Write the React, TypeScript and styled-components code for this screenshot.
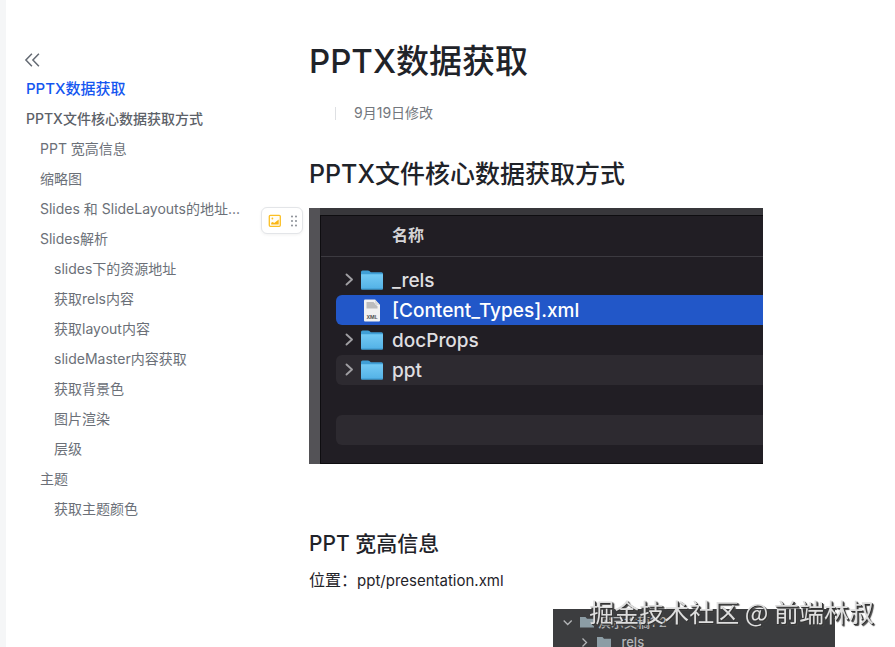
import React from "react";
import styled, { createGlobalStyle } from "styled-components";

const GlobalStyle = createGlobalStyle`
  *, *::before, *::after { box-sizing: border-box; }
  body {
    margin: 0;
    background: #fff;
    color: #1f2329;
    font-family: Inter, "Noto Sans CJK SC", sans-serif;
  }
  h1, h2, h3, p, ul { margin: 0; padding: 0; }
  ul { list-style: none; }
`;

const Page = styled.div`
  display: flex;
  height: 100vh;
  overflow: hidden;
  border-left: 6px solid #f5f6f7;
`;

const Sidebar = styled.nav`
  flex: none;
  width: 240px;
  padding: 46px 0 0 16px;
`;

const CollapseButton = styled.button`
  display: flex;
  align-items: center;
  justify-content: center;
  width: 20px;
  height: 28px;
  padding: 0;
  border: 0;
  background: none;
  color: #646a73;
  cursor: pointer;
`;

const OutlineLink = styled.a<{ $level: number; $active?: boolean }>`
  display: block;
  padding-left: ${(p) => 4 + p.$level * 14}px;
  overflow: hidden;
  color: ${(p) => (p.$active ? "#1456f0" : p.$level === 0 ? "#5c6168" : "#6b7078")};
  font-size: ${(p) => (p.$active ? 15 : 14)}px;
  font-weight: ${(p) => (p.$level === 0 ? 500 : 400)};
  line-height: 30px;
  text-decoration: none;
  text-overflow: ellipsis;
  white-space: nowrap;
`;

const Gutter = styled.div`
  display: flex;
  flex: none;
  align-items: flex-start;
  justify-content: flex-end;
  width: 63px;
  padding: 207px 6px 0 0;
`;

const BlockHandle = styled.button`
  display: flex;
  align-items: center;
  justify-content: space-between;
  width: 42px;
  height: 27px;
  padding: 0 2px 0 6px;
  border: 1px solid #e3e5e8;
  border-radius: 6px;
  background: #fff;
  box-shadow: 0 1px 3px rgba(31, 35, 41, 0.06);
  cursor: grab;
`;

const Article = styled.main`
  flex: 1;
  min-width: 0;
  padding: 38px 60px 0 0;
`;

const Title = styled.h1`
  font-size: 33px;
  font-weight: 500;
  line-height: 46px;
`;

const Meta = styled.p`
  display: flex;
  align-items: center;
  gap: 18px;
  margin-top: 18px;
  padding-left: 26px;
  color: #73777d;
  font-size: 14px;
  line-height: 22px;
`;

const Divider = styled.span`
  width: 1px;
  height: 13px;
  background: #dee0e3;
`;

const SectionTitle = styled.h2`
  margin-top: 32px;
  font-size: 25px;
  font-weight: 500;
  line-height: 36px;
`;

const SubTitle = styled.h3`
  margin-top: 64px;
  font-size: 21px;
  font-weight: 500;
  line-height: 32px;
`;

const Paragraph = styled.p`
  margin-top: 7px;
  font-size: 16px;
  line-height: 26px;
`;

const FilePath = styled.span`
  font-size: 15px;
`;

const Finder = styled.figure`
  max-width: 454px;
  margin: 16px 0 0;
  border-left: 11px solid #535256;
  background: #211e24;
`;

const FinderToolbar = styled.div`
  height: 7px;
  background: #38373b;
`;

const FinderBody = styled.div`
  padding-bottom: 18px;
  border-top: 1px solid #0e0d10;
  border-left: 1px solid #0e0d10;
  border-bottom: 1px solid #0e0d10;
`;

const FinderHeader = styled.div`
  height: 41px;
  padding-left: 71px;
  border-bottom: 1px solid #3c3a40;
  color: #d4d3d6;
  font-size: 16px;
  font-weight: 700;
  line-height: 38px;
`;

const FinderList = styled.ul`
  padding: 8px 0 0 15px;
`;

const FinderRow = styled.li<{ $tone?: "selected" | "stripe" }>`
  display: flex;
  align-items: center;
  height: 30px;
  padding-left: 6px;
  border-radius: 6px 0 0 6px;
  background: ${(p) =>
    p.$tone === "selected" ? "#2257c8" : p.$tone === "stripe" ? "#2d2a30" : "transparent"};
  color: ${(p) => (p.$tone === "selected" ? "#fff" : "#dfdee0")};
  font-size: 19px;
  font-weight: 500;
  line-height: 28px;
`;

const IconSlot = styled.span<{ $width: number }>`
  display: flex;
  flex: none;
  align-items: center;
  justify-content: center;
  width: ${(p) => p.$width}px;
`;

const FileName = styled.span`
  padding: 2px 0 0 4px;
`;

const Tree = styled.figure`
  max-width: 282px;
  margin: 15px 0 0 auto;
  padding: 3px 0 8px;
  background: #3c3d3f;
`;

const TreeRow = styled.div<{ $depth: number }>`
  display: flex;
  align-items: center;
  gap: 4px;
  height: 20px;
  padding-left: ${(p) => 9 + p.$depth * 17}px;
  color: #b4b6b8;
  font-size: 13px;
  font-weight: 500;
  line-height: 20px;
`;

const TreeToggle = styled.span`
  display: flex;
  width: 14px;
`;

const Watermark = styled.div`
  position: fixed;
  right: 21px;
  bottom: 18px;
  color: #dedede;
  font-family: "Noto Sans CJK SC", sans-serif;
  font-size: 25px;
  line-height: 36px;
  text-shadow: 1px 1px 0 #333, 2px 2px 1px #444;
  white-space: nowrap;
  pointer-events: none;
`;

const outline = [
  { text: "PPTX数据获取", level: 0, active: true },
  { text: "PPTX文件核心数据获取方式", level: 0 },
  { text: "PPT 宽高信息", level: 1 },
  { text: "缩略图", level: 1 },
  { text: "Slides 和 SlideLayouts的地址...", level: 1 },
  { text: "Slides解析", level: 1 },
  { text: "slides下的资源地址", level: 2 },
  { text: "获取rels内容", level: 2 },
  { text: "获取layout内容", level: 2 },
  { text: "slideMaster内容获取", level: 2 },
  { text: "获取背景色", level: 2 },
  { text: "图片渲染", level: 2 },
  { text: "层级", level: 2 },
  { text: "主题", level: 1 },
  { text: "获取主题颜色", level: 2 },
];

type FinderEntry = { name: string; kind: "folder" | "xml" | "empty"; tone?: "selected" | "stripe" };

const entries: FinderEntry[] = [
  { name: "_rels", kind: "folder" },
  { name: "[Content_Types].xml", kind: "xml", tone: "selected" },
  { name: "docProps", kind: "folder" },
  { name: "ppt", kind: "folder", tone: "stripe" },
  { name: "", kind: "empty" },
  { name: "", kind: "empty", tone: "stripe" },
];

const CollapseIcon = () => (
  <svg width="16" height="14" viewBox="0 0 16 14" fill="none" stroke="currentColor" strokeWidth="1.5">
    <path d="M7.9 .8 1.9 7l6 6.2M14.9 .8 8.9 7l6 6.2" />
  </svg>
);

const PictureIcon = () => (
  <svg width="14" height="14" viewBox="0 0 14 14">
    <rect x="1.3" y="1.3" width="11" height="11" rx="1" fill="#fffdf5" stroke="#fbbf24" strokeWidth="1.3" />
    <circle cx="4.4" cy="4.5" r=".9" fill="#fbbf24" />
    <path d="M3.2 10.6V8.8l1.5-.8 1.5 1L10.7 5.6v5z" fill="#fbb615" />
  </svg>
);

const GripIcon = () => (
  <svg width="12" height="14" viewBox="0 0 12 14" fill="#7b8088">
    {[2.5, 7, 11.5].map((y) => (
      <React.Fragment key={y}>
        <circle cx="4" cy={y} r="0.9" />
        <circle cx="8" cy={y} r="0.9" />
      </React.Fragment>
    ))}
  </svg>
);

const Chevron = () => (
  <svg width="10" height="14" viewBox="0 0 10 14" fill="none" stroke="#a09fa3" strokeWidth="1.9" strokeLinecap="round" strokeLinejoin="round">
    <path d="M2.5 1.5l5.500 5-5.500 5" />
  </svg>
);

const FolderIcon = () => (
  <svg width="22" height="20" viewBox="0 0 22 20">
    <defs>
      <linearGradient id="folder" x1="0" y1="0" x2="0" y2="1">
        <stop offset="0" stopColor="#74caf4" />
        <stop offset="1" stopColor="#52b1e6" />
      </linearGradient>
    </defs>
    <path d="M0 2q0-1.5 1.5-1.5h5.5q.8 0 1.4.6L9.8 2.3H20.5q1.5 0 1.5 1.5V8H0z" fill="#3f9fd6" />
    <path d="M0 4.2h22V18.5q0 1-1 1H1q-1 0-1-1z" fill="url(#folder)" />
    <path d="M0 18.5h22q0 1-1 1H1q-1 0-1-1z" fill="#3b96cc" />
  </svg>
);

const XmlIcon = () => (
  <svg width="18" height="23" viewBox="0 0 18 23">
    <path d="M1 1.5Q1 .5 2 .5h10l5 5.5v15.5q0 1-1 1H2q-1 0-1-1z" fill="#f1f1f1" />
    <path d="M3.5 3h7l4 4.5v2h-11z" fill="#bcbcbc" />
    <path d="M12 .5V5q0 1 1 1h4z" fill="#dadada" />
    <text x="9" y="20" textAnchor="middle" fontSize="5" fontWeight="700" fill="#555">XML</text>
  </svg>
);

const TreeChevron = ({ open }: { open?: boolean }) => (
  <svg width="11" height="11" viewBox="0 0 11 11" fill="none" stroke="#b4b6b8" strokeWidth="1.3">
    <path d={open ? "M1.7 3.5l4 4 4-4" : "M3.5 1.5l4 4-4 4"} />
  </svg>
);

const TreeFolder = () => (
  <svg width="14" height="12" viewBox="0 0 14 12" fill="#8c9da5">
    <path d="M0 1h5.5L7 2.8h7V11.5H0z" />
  </svg>
);

export default function App() {
  return (
    <>
      <GlobalStyle />
      <Page>
        <Sidebar aria-label="目录">
          <CollapseButton type="button" aria-label="收起目录">
            <CollapseIcon />
          </CollapseButton>
          <ul>
            {outline.map((item) => (
              <li key={item.text}>
                <OutlineLink href="#" $level={item.level} $active={item.active}>
                  {item.text}
                </OutlineLink>
              </li>
            ))}
          </ul>
        </Sidebar>
        <Gutter>
          <BlockHandle type="button" aria-label="图片操作">
            <PictureIcon />
            <GripIcon />
          </BlockHandle>
        </Gutter>
        <Article>
          <Title>PPTX数据获取</Title>
          <Meta>
            <Divider />
            9月19日修改
          </Meta>
          <SectionTitle>PPTX文件核心数据获取方式</SectionTitle>
          <Finder>
            <FinderToolbar />
            <FinderBody>
              <FinderHeader>名称</FinderHeader>
              <FinderList>
                {entries.map((entry, i) => (
                  <FinderRow key={i} $tone={entry.tone}>
                    <IconSlot $width={14}>{entry.kind === "folder" && <Chevron />}</IconSlot>
                    <IconSlot $width={32}>
                      {entry.kind === "folder" && <FolderIcon />}
                      {entry.kind === "xml" && <XmlIcon />}
                    </IconSlot>
                    <FileName>{entry.name}</FileName>
                  </FinderRow>
                ))}
              </FinderList>
            </FinderBody>
          </Finder>
          <SubTitle>PPT 宽高信息</SubTitle>
          <Paragraph>
            位置：<FilePath>ppt/presentation.xml</FilePath>
          </Paragraph>
          <Tree>
            <TreeRow $depth={0}>
              <TreeToggle>
                <TreeChevron open />
              </TreeToggle>
              <TreeFolder />
              演示文稿1 2
            </TreeRow>
            <TreeRow $depth={1}>
              <TreeToggle>
                <TreeChevron />
              </TreeToggle>
              <TreeFolder />
              _rels
            </TreeRow>
          </Tree>
        </Article>
      </Page>
      <Watermark>掘金技术社区 @ 前端林叔</Watermark>
    </>
  );
}
